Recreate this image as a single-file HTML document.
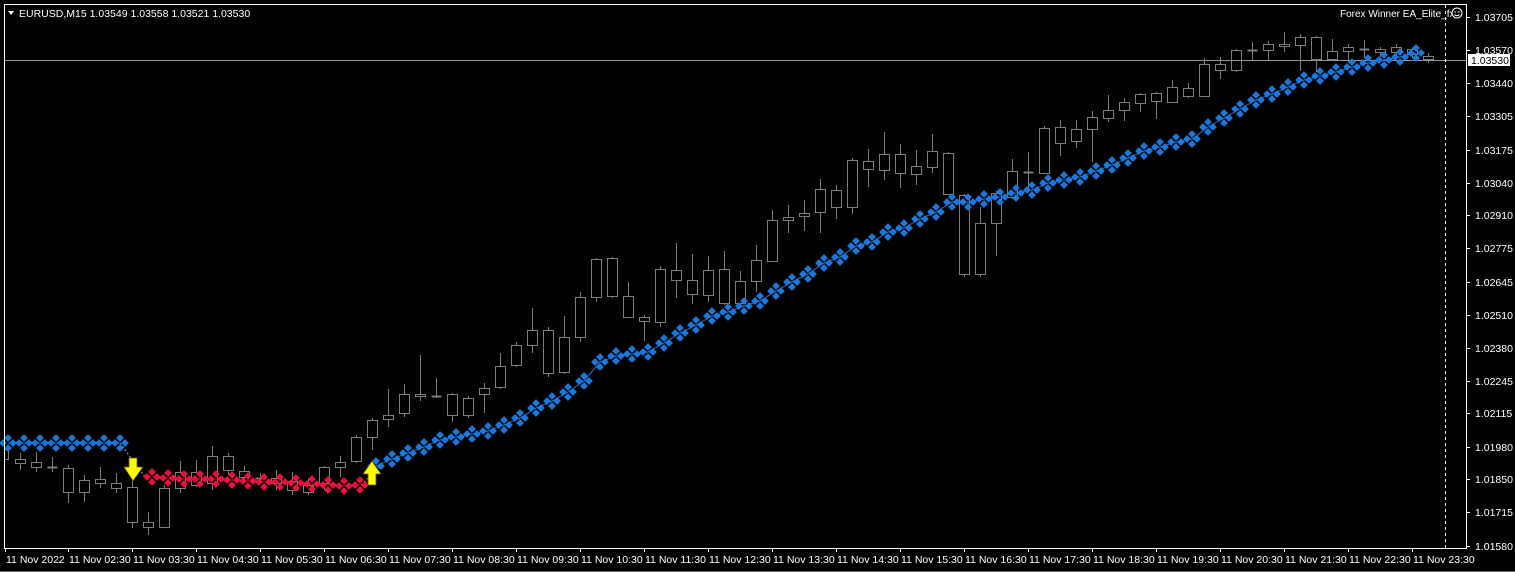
<!DOCTYPE html>
<html><head><meta charset="utf-8">
<style>
html,body{margin:0;padding:0;background:#000;}
body{width:1515px;height:572px;overflow:hidden;position:relative;font-family:"Liberation Sans",sans-serif;}
svg{position:absolute;left:0;top:0;}
</style></head><body>
<svg id="s" width="1515" height="572" xmlns="http://www.w3.org/2000/svg" font-family="Liberation Sans, sans-serif" font-size="10.5">
<rect width="1515" height="572" fill="#000"/>
<line x1="0" y1="571.5" x2="1515" y2="571.5" stroke="#6a6a6a"/>
<g id="c" fill="none" stroke="#7c7c7c" stroke-width="1" shape-rendering="crispEdges"></g>
<line x1="4" y1="60.5" x2="1466" y2="60.5" stroke="#8a94a0" shape-rendering="crispEdges"/>
<line x1="1445.5" y1="5" x2="1445.5" y2="548" stroke="#fff" stroke-dasharray="3,3" shape-rendering="crispEdges"/>
<g id="m"></g>
<polygon points="129,458 137,458 137,467 143,467 133,481 124,467 129,467" fill="#ffff00" stroke="#555500" stroke-width="0.8"/>
<polygon points="372,461 381,474 376,474 376,485 368,485 368,474 363,474" fill="#ffff00" stroke="#555500" stroke-width="0.8"/>
<rect x="4.5" y="4.5" width="1462" height="544" fill="none" stroke="#fff" shape-rendering="crispEdges"/>
<g fill="#fff" id="t">
<polygon points="8,11 14,11 11,15"/>
<text x="19" y="17">EURUSD,M15  1.03549 1.03558 1.03521 1.03530</text>
<text x="1340" y="17" font-size="10">Forex Winner EA_Elite_fx</text>
</g>
<circle cx="1457" cy="13" r="5" fill="#000" stroke="#fff"/>
<circle cx="1455" cy="12" r="0.8" fill="#fff"/><circle cx="1459" cy="12" r="0.8" fill="#fff"/>
<path d="M1454.5,14.5 Q1457,17 1459.5,14.5" stroke="#fff" fill="none"/>
<rect x="1468" y="54" width="42" height="12" fill="#fff"/>
<text x="1471" y="64" fill="#000">1.03530</text>
<g id="ax" fill="#fff"></g>
</svg>
<script>
var NS="http://www.w3.org/2000/svg";
function el(p,n,a,t){var e=document.createElementNS(NS,n);for(var k in a)e.setAttribute(k,a[k]);if(t)e.textContent=t;p.appendChild(e);return e;}
var B=[[449,459,445,462],[459,463,453,470],[462,467,452,472],[467,467,457,472],[468,492,465,503],[480,492,475,502],[479,483,467,488],[483,488,473,493],
[487,522,480,528],[522,527,512,535],[488,527,485,527],[472,488,461,493],[472,485,460,487],[456,483,446,490],[456,470,453,475],[471,477,466,479],
[478,478,473,483],[478,483,470,490],[481,490,472,495],[485,492,478,495],[467,483,466,490],[462,467,456,477],[437,461,435,463],[420,437,418,450],
[415,419,389,427],[394,413,384,417],[394,396,355,401],[396,396,378,398],[394,415,393,422],[398,415,396,418],[388,394,383,413],[366,387,353,389],
[345,365,342,367],[330,345,308,353],[330,373,327,377],[337,372,316,374],[297,337,292,342],[259,297,258,302],[258,296,257,298],[296,317,282,318],
[317,321,315,341],[269,322,266,327],[270,280,243,298],[280,294,254,304],[270,295,256,302],[269,303,251,305],[281,303,271,307],[260,281,245,292],
[220,261,210,262],[217,220,205,233],[213,216,200,231],[189,212,179,233],[190,207,185,219],[160,207,158,214],[161,169,149,187],[154,170,132,180],
[154,173,144,188],[166,174,150,185],[151,167,134,173],[153,194,152,195],[195,274,194,277],[223,274,207,277],[193,223,191,256],[171,197,159,199],
[172,172,152,192],[128,173,126,174],[127,143,120,156],[129,141,120,148],[117,129,111,162],[110,118,95,122],[102,110,98,121],[94,103,93,112],
[93,101,92,119],[87,102,80,103],[88,96,83,98],[64,96,58,97],[64,70,57,79],[50,70,49,72],[50,50,42,60],[44,50,41,60],
[44,46,32,52],[37,45,34,71],[37,59,36,72],[51,59,39,60],[47,51,44,62],[49,49,40,58],[49,52,47,57],[47,52,44,58],[49,54,48,58],[56,59,53,63]];
var c=document.getElementById('c');
B.forEach(function(b,i){var x=4+16*i;
 if(x<8){el(c,'line',{x1:x+0.5,y1:b[2],x2:x+0.5,y2:b[3]});el(c,'rect',{x:4.5,y:b[0]+0.5,width:x,height:Math.max(b[1]-b[0],0)});return;}
 el(c,'line',{x1:x+0.5,y1:b[2],x2:x+0.5,y2:b[0]});el(c,'line',{x1:x+0.5,y1:b[1],x2:x+0.5,y2:b[3]});
 if(b[1]-b[0]<1){el(c,'line',{x1:x-4.5,y1:b[0]+0.5,x2:x+5.5,y2:b[0]+0.5,'stroke-width':2});}
 else el(c,'rect',{x:x-4.5,y:b[0]+0.5,width:10,height:b[1]-b[0]});
});
var m=document.getElementById('m');
function cluster(x,y,col){[[0,-5],[0,5],[-5,0],[5,0]].forEach(function(d){var cx=x+d[0],cy=y+d[1],r=3.9;
 el(m,'polygon',{points:(cx)+','+(cy-r)+' '+(cx+r)+','+cy+' '+cx+','+(cy+r)+' '+(cx-r)+','+cy,fill:col});});}
var blue0=[443,443,443,443,443,443,443,443];
var red=[477,478,479,479,479,480,481,482,482,483,484,485,486,485];
var blue=[466,459,453,447,440,437,434,431,425,418,408,401,392,381,362,356,354,352,343,333,325,316,312,306,301,291,
282,274,263,257,246,242,232,228,219,212,202,202,199,197,193,190,183,180,177,171,165,
158,151,147,142,139,127,118,109,100,94,87,80,76,72,67,63,60,57,53];
function line(arr,start,col){var p=arr.map(function(y,k){return (4+16*(start+k)+4)+','+y;}).join(' ');
 el(m,'polyline',{points:p,fill:'none',stroke:col,'stroke-width':1});
 arr.forEach(function(y,k){cluster(4+16*(start+k)+4,y,col);});}
el(m,'line',{x1:120,y1:443,x2:145,y2:477,stroke:'#aaa','stroke-dasharray':'2,2'});
el(m,'line',{x1:361,y1:485,x2:380,y2:466,stroke:'#aaa','stroke-dasharray':'2,2'});
line(blue0,0,'#1a78dc');line(red,9,'#e8103c');line(blue,23,'#1a78dc');
var ax=document.getElementById('ax');
[["1.03705",17],["1.03570",50],["1.03440",83],["1.03305",116],["1.03175",150],["1.03040",183],["1.02910",215],["1.02775",248],["1.02645",282],["1.02510",315],["1.02380",348],["1.02245",381],["1.02115",413],["1.01980",447],["1.01850",479],["1.01715",512],["1.01580",546]].forEach(function(p){
 el(ax,'text',{x:1475,y:p[1]+4},p[0]);
 el(ax,'rect',{x:1467,y:p[1],width:3,height:1});});
el(ax,'text',{x:6,y:563},"11 Nov 2022");el(ax,'rect',{x:5,y:548,width:1,height:4});
for(var k=0;k<22;k++){var x=68+64*k,h=2+k;var hh=(h<10?'0':'')+h+':30';
 el(ax,'text',{x:x+1,y:563},'11 Nov '+hh);el(ax,'rect',{x:x,y:548,width:1,height:4});}
</script>
</body></html>
